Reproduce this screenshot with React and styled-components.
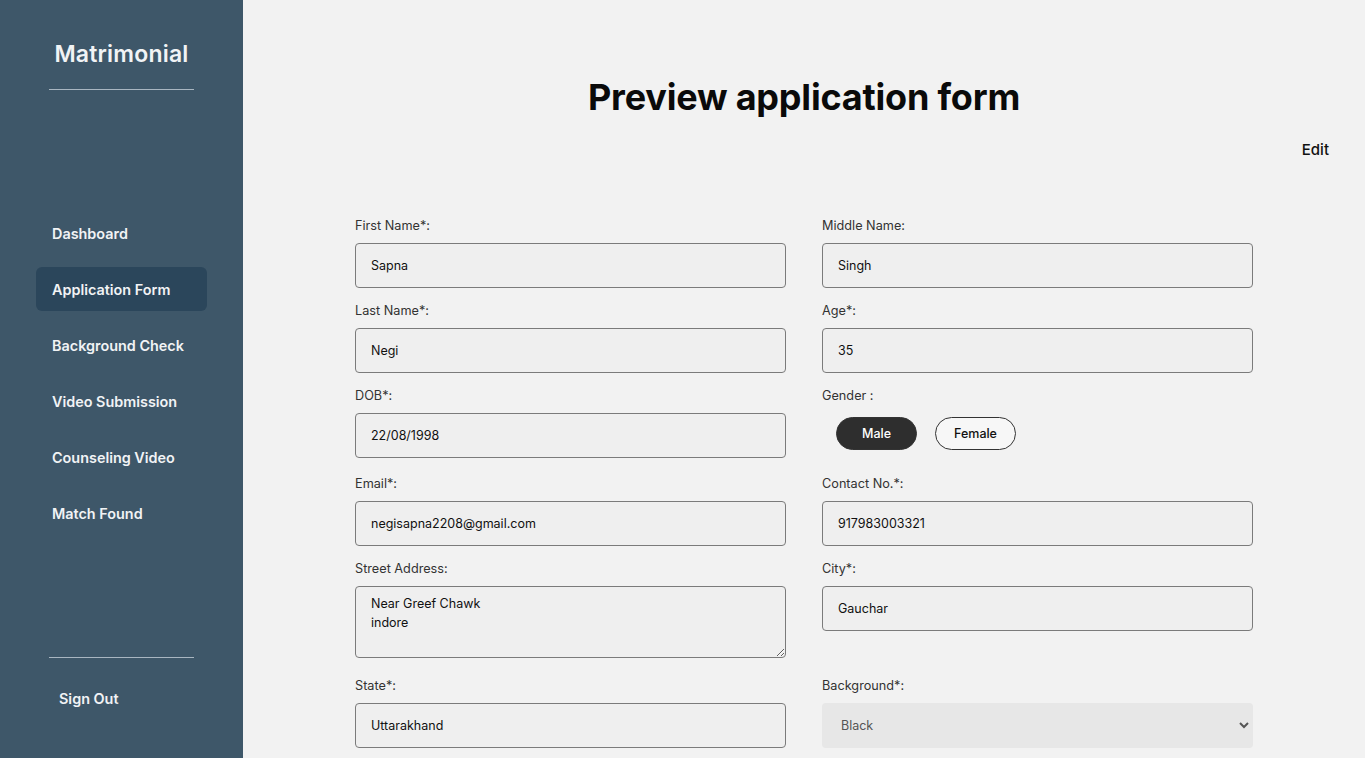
import React from "react";
import styled, { createGlobalStyle } from "styled-components";

const Global = createGlobalStyle`
  html, body { margin: 0; padding: 0; height: 100%; }
  body { font-family: Inter, "Noto Sans", sans-serif; background: #f2f2f2; overflow: hidden; }
  * { box-sizing: border-box; }
`;

const Layout = styled.div`
  display: flex;
  height: 100vh;
  width: 100%;
`;

const Sidebar = styled.aside`
  width: 243px;
  flex-shrink: 0;
  height: 100vh;
  background: #3e5769;
  display: flex;
  flex-direction: column;
  color: #f1f3f5;
`;

const Brand = styled.div`
  padding-top: 39px;
  text-align: center;
  font-size: 23px;
  line-height: 30px;
  font-weight: 600;
  letter-spacing: 0.2px;
`;

const Rule = styled.hr`
  width: 145px;
  margin: ${(p) => p.$m || "0 auto"};
  border: 0;
  border-top: 1px solid #a9b6c1;
  height: 0;
`;

const Nav = styled.nav`
  display: flex;
  flex-direction: column;
  gap: 12px;
  padding: 0 36px;
  margin-top: 121px;
`;

const NavItem = styled.a`
  display: flex;
  align-items: center;
  height: 44px;
  padding-left: 16px;
  border-radius: 6px;
  font-size: 14.4px;
  font-weight: 600;
  color: #f1f3f5;
  text-decoration: none;
  background: ${(p) => (p.$active ? "#2b465b" : "transparent")};
`;

const Bottom = styled.div`
  margin-top: auto;
  padding-bottom: 49px;
`;

const SignOut = styled.a`
  display: block;
  margin-top: 31px;
  padding-left: 59px;
  font-size: 14.4px;
  line-height: 20px;
  font-weight: 600;
  color: #f1f3f5;
`;

const Main = styled.main`
  flex: 1;
  height: 100vh;
  overflow-y: auto;
  scrollbar-width: none;
  padding: 0 36px 60px 0;
`;

const Title = styled.h1`
  margin: 0;
  padding-top: 74px;
  padding-left: 36px;
  text-align: center;
  font-size: 36px;
  line-height: 46px;
  font-weight: 700;
  color: #0a0a0a;
  letter-spacing: -0.2px;
`;

const EditRow = styled.div`
  display: flex;
  justify-content: flex-end;
  margin-top: 20px;
`;

const EditButton = styled.button`
  border: 0;
  background: none;
  padding: 0;
  font-family: inherit;
  font-size: 15px;
  line-height: 20px;
  font-weight: 500;
  color: #111;
`;

const Form = styled.form`
  width: 898px;
  margin: 57px auto 0;
  padding-left: 36px;
  box-sizing: content-box;
  display: grid;
  grid-template-columns: 431px 431px;
  column-gap: 36px;
`;

const Field = styled.div`
  display: flex;
  flex-direction: column;
`;

const Label = styled.label`
  font-size: 12.7px;
  line-height: 16px;
  color: #333;
  padding-top: 1px;
  margin-bottom: 9px;
`;

const Input = styled.input`
  height: 45px;
  width: 100%;
  margin: 0 0 14px;
  padding: 0 15px;
  border: 1px solid #7b7b7b;
  border-radius: 4px;
  background: #efefef;
  font-family: inherit;
  font-size: 12.5px;
  color: #111;
  outline: none;
`;

const TextArea = styled.textarea`
  height: 72px;
  width: 100%;
  margin: 0 0 19px;
  padding: 7px 15px;
  border: 1px solid #7b7b7b;
  border-radius: 4px;
  background: #efefef;
  font-family: inherit;
  font-size: 12.5px;
  line-height: 19px;
  color: #111;
  outline: none;
  display: block;
`;

const Select = styled.select`
  height: 45px;
  width: 100%;
  margin: 0 0 14px;
  padding: 0 14px;
  border: 1px solid transparent;
  border-radius: 4px;
  background-color: #e7e7e7;
  font-family: inherit;
  font-size: 12.5px;
  color: #555;
  outline: none;
`;

const GenderGroup = styled.div`
  display: flex;
  gap: 18px;
  padding: 4px 14px 25px;
`;

const Pill = styled.button`
  width: 81px;
  height: 33px;
  border-radius: 17px;
  border: 1px solid #333;
  font-family: inherit;
  font-size: 12.5px;
  font-weight: 500;
  background: ${(p) => (p.$selected ? "#2e2e2e" : "#f7f7f7")};
  color: ${(p) => (p.$selected ? "#fff" : "#111")};
`;

const navItems = [
  "Dashboard",
  "Application Form",
  "Background Check",
  "Video Submission",
  "Counseling Video",
  "Match Found",
];

function TextField({ label, value }) {
  return (
    <Field>
      <Label>{label}</Label>
      <Input readOnly value={value} />
    </Field>
  );
}

export default function App() {
  return (
    <>
      <Global />
      <Layout>
        <Sidebar>
          <Brand>Matrimonial</Brand>
          <Rule $m="20px auto 0" />
          <Nav>
            {navItems.map((n) => (
              <NavItem key={n} $active={n === "Application Form"}>
                {n}
              </NavItem>
            ))}
          </Nav>
          <Bottom>
            <Rule />
            <SignOut>Sign Out</SignOut>
          </Bottom>
        </Sidebar>
        <Main>
          <Title>Preview application form</Title>
          <EditRow>
            <EditButton type="button">Edit</EditButton>
          </EditRow>
          <Form onSubmit={(e) => e.preventDefault()}>
            <TextField label="First Name*:" value="Sapna" />
            <TextField label="Middle Name:" value="Singh" />
            <TextField label="Last Name*:" value="Negi" />
            <TextField label="Age*:" value="35" />
            <TextField label="DOB*:" value="22/08/1998" />
            <Field>
              <Label>Gender :</Label>
              <GenderGroup>
                <Pill type="button" $selected>Male</Pill>
                <Pill type="button">Female</Pill>
              </GenderGroup>
            </Field>
            <TextField label="Email*:" value="negisapna2208@gmail.com" />
            <TextField label="Contact No.*:" value="917983003321" />
            <Field>
              <Label>Street Address:</Label>
              <TextArea readOnly value={"Near Greef Chawk\nindore"} />
            </Field>
            <TextField label="City*:" value="Gauchar" />
            <TextField label="State*:" value="Uttarakhand" />
            <Field>
              <Label>Background*:</Label>
              <Select defaultValue="Black">
                <option>Black</option>
                <option>White</option>
                <option>Asian</option>
              </Select>
            </Field>
          </Form>
        </Main>
      </Layout>
    </>
  );
}
